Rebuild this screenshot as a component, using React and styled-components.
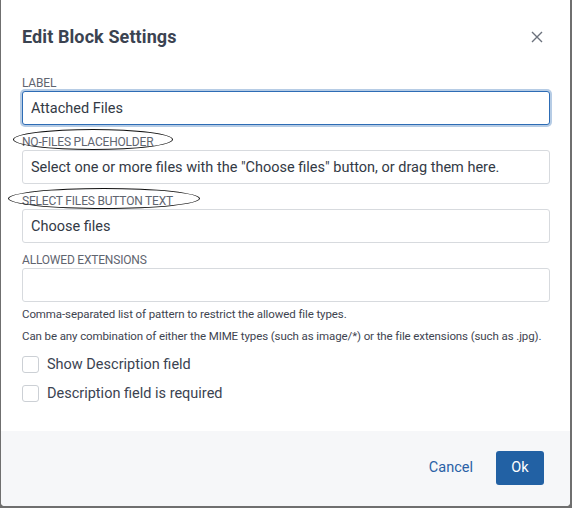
import React from 'react';
import styled, { createGlobalStyle } from 'styled-components';

const Global = createGlobalStyle`
    html, body {
        margin: 0;
        padding: 0;
        background: #6f6f6f;
        font-family: Roboto, "Liberation Sans", sans-serif;
    }
    * { box-sizing: border-box; }
`

const Backdrop = styled.div`
    width: 572px;
    height: 508px;
    padding: 0 2px 2px 1px;
    background: #6f6f6f;
`

const Dialog = styled.div`
    background: #ffffff;
    height: 100%;
    display: flex;
    flex-direction: column;
    border-radius: 0 0 4px 4px;
    overflow: hidden;
`

const Header = styled.div`
    display: flex;
    justify-content: space-between;
    align-items: flex-start;
    padding: 26px 26px 0 21px;
    height: 72px;
`

const Title = styled.h2`
    margin: 0;
    font-size: 18px;
    font-weight: 700;
    color: #3b4351;
    letter-spacing: 0.1px;
`

const Close = styled.button`
    border: 0;
    background: none;
    padding: 0;
    margin-top: 4px;
    width: 14px;
    height: 14px;
    display: flex;
    cursor: pointer;
`

const Body = styled.div`
    flex: 1;
    padding: 0 20px 0 21px;
    display: flex;
    flex-direction: column;
`

const Field = styled.div`
    display: flex;
    flex-direction: column;
    margin-bottom: 6px;
`

const LabelWrap = styled.div`
    position: relative;
    height: 17px;
    margin-bottom: 2px;
`

const Label = styled.label`
    font-size: 12px;
    color: #5f6570;
    text-transform: uppercase;
    letter-spacing: -0.2px;
    line-height: 17px;
`

const Ellipse = styled.span`
    position: absolute;
    left: ${p => p.$left}px;
    top: -2px;
    width: ${p => p.$width}px;
    height: 21px;
    border: 1px solid #111;
    border-radius: 50%;
    pointer-events: none;
`

const Input = styled.input`
    height: 34px;
    width: 100%;
    border: 1px solid ${p => (p.$focus ? '#2d6cb5' : '#d7dade')};
    border-radius: 3px;
    padding: 0 8px;
    font-family: inherit;
    font-size: 14.5px;
    color: #333a45;
    outline: none;
    box-shadow: ${p => (p.$focus ? '0 0 0 2px rgba(45,108,181,0.35)' : 'none')};
`

const Help = styled.p`
    margin: ${p => (p.$first ? '-5px 0 0' : '0 0 3px')};
    font-size: 11.5px;
    color: #3e4450;
    line-height: 22px;
    white-space: nowrap;
    letter-spacing: -0.1px;
`

const Check = styled.label`
    display: flex;
    align-items: center;
    gap: 8px;
    font-size: 14.5px;
    color: #3b4351;
    height: 29px;
`

const Box = styled.span`
    width: 17px;
    height: 17px;
    border: 1px solid #ccd0d5;
    border-radius: 3px;
    background: #fff;
`

const Footer = styled.div`
    height: 75px;
    background: #f6f7f9;
    display: flex;
    align-items: center;
    justify-content: flex-end;
    gap: 23px;
    padding: 0 26px 2px;
`

const LinkButton = styled.button`
    border: 0;
    background: none;
    font-family: inherit;
    font-size: 14.5px;
    color: #2a61a6;
    padding: 0;
`

const Primary = styled.button`
    border: 0;
    border-radius: 3px;
    background: #2261a4;
    color: #fff;
    font-family: inherit;
    font-size: 14.5px;
    width: 48px;
    height: 34px;
`

const fields = [
    { label: 'Label', value: 'Attached Files', focus: true },
    { label: 'No-files placeholder', value: 'Select one or more files with the "Choose files" button, or drag them here.', ellipse: [-9, 160] },
    { label: 'Select files button text', value: 'Choose files', ellipse: [-14, 192] },
    { label: 'Allowed extensions', value: '' },
];

export default function App() {
    return (
        <>
            <Global />
            <Backdrop>
                <Dialog>
                    <Header>
                        <Title>Edit Block Settings</Title>
                        <Close aria-label="Close">
                            <svg width="14" height="14" viewBox="0 0 14 14">
                                <path d="M2 2 L12 12 M12 2 L2 12" stroke="#6b717c" strokeWidth="1.4" />
                            </svg>
                        </Close>
                    </Header>
                    <Body>
                        {fields.map(f => (
                            <Field key={f.label}>
                                <LabelWrap>
                                    <Label>{f.label}</Label>
                                    {f.ellipse && <Ellipse $left={f.ellipse[0]} $width={f.ellipse[1]} />}
                                </LabelWrap>
                                <Input $focus={f.focus} defaultValue={f.value} />
                            </Field>
                        ))}
                        <Help $first>Comma-separated list of pattern to restrict the allowed file types.</Help>
                        <Help>Can be any combination of either the MIME types (such as image/*) or the file extensions (such as .jpg).</Help>
                        <Check><Box />Show Description field</Check>
                        <Check><Box />Description field is required</Check>
                    </Body>
                    <Footer>
                        <LinkButton>Cancel</LinkButton>
                        <Primary>Ok</Primary>
                    </Footer>
                </Dialog>
            </Backdrop>
        </>
    );
}
